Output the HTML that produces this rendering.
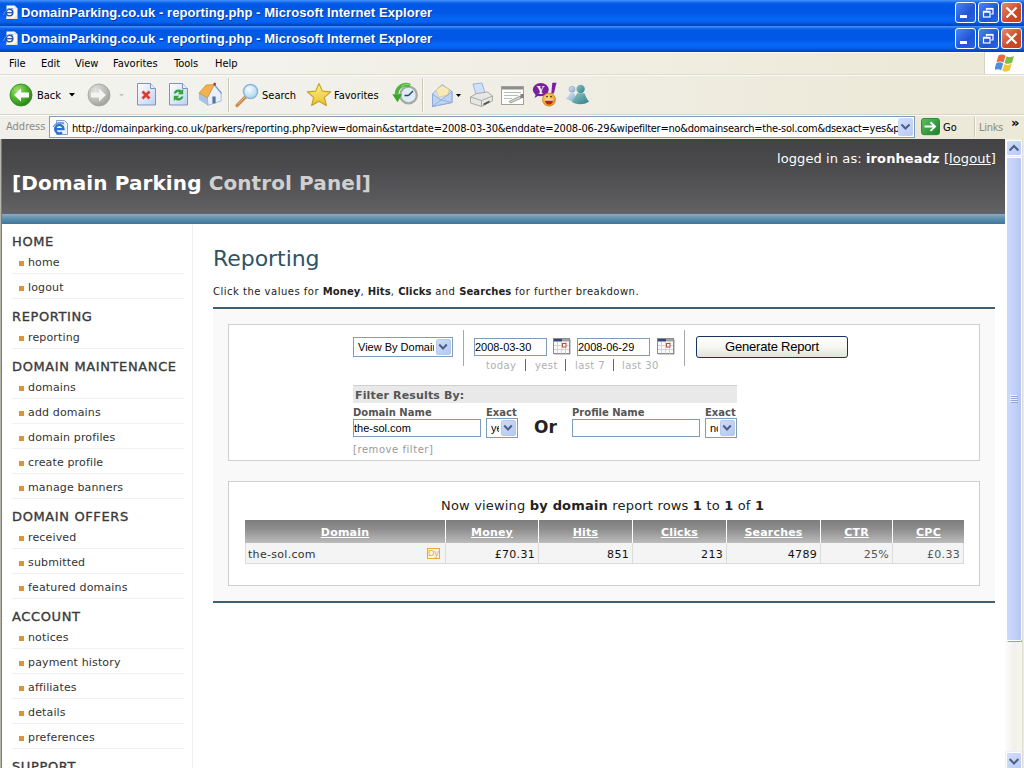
<!DOCTYPE html>
<html lang="en">
<head>
<meta charset="utf-8">
<title>DomainParking.co.uk - reporting.php - Microsoft Internet Explorer</title>
<style>
*{box-sizing:border-box;margin:0;padding:0}
html,body{width:1024px;height:768px;overflow:hidden;background:#fff}
body{position:relative;font-family:"DejaVu Sans","Liberation Sans",sans-serif;color:#333}
.abs{position:absolute}
/* ---------- XP chrome ---------- */
.tb{position:absolute;left:0;width:1024px;height:26px;background:linear-gradient(#4592fb 0,#2a7cf4 1.500px,#0a5fe9 3px,#0058e6 5px,#0058e6 13px,#0766f6 18px,#0562ee 22px,#004fd2 24px,#0040b4 26px)}
.tb .t{position:absolute;left:21px;top:5px;font:bold 13px/16px "Liberation Sans",sans-serif;letter-spacing:.07px;color:#fff;white-space:nowrap;text-shadow:1px 1px 0 #0a3aa0}
.tb .ico{position:absolute;left:2.500px;top:4.500px;width:16px;height:16px}
.wb{position:absolute;top:2px;width:21px;height:21px;border:1px solid #fff;border-radius:3px;background:linear-gradient(135deg,#4a86f0,#1f54d6 60%,#2a63e0)}
.wb svg{position:absolute;left:0;top:0}
.wb.x{background:linear-gradient(135deg,#e88a6a,#cc4a26 60%,#c8441f)}
.menubar{position:absolute;left:0;top:52px;width:1024px;height:23px;background:linear-gradient(90deg,#f6f5f1,#f2f1ea 30%,#f0eee2 60%,#ece9d8 90%);border-bottom:1px solid #dedbcb;box-shadow:inset 0 1px 0 #f8fbff}
.menubar span{position:absolute;top:4px;font:11px/15px "DejaVu Sans Condensed","Liberation Sans",sans-serif;color:#000}
.toolbar{position:absolute;left:0;top:75px;width:1024px;height:39px;overflow:hidden;background:linear-gradient(90deg,#f3f3ef,#f1f0ea 30%,#efede2 60%,#ece9d8 90%);border-top:1px solid #fbfbf8}
.toolbar .lbl{position:absolute;top:12px;font:11px/15px "DejaVu Sans Condensed","Liberation Sans",sans-serif;color:#000}
.addr{position:absolute;left:0;top:114px;width:1024px;height:25px;background:linear-gradient(90deg,#f0efea,#efeee6 30%,#eeece0 60%,#ece9d8 90%);border-top:1px solid #dad7c6;box-shadow:inset 0 1px 0 #fbfbf8}
.addr .lbl{position:absolute;font:11px/15px "DejaVu Sans Condensed","Liberation Sans",sans-serif}

.abox{position:absolute;left:49px;top:1px;width:866px;height:22px;border:1px solid #7f9db9;background:#fff;overflow:hidden}
.abox .url{position:absolute;left:22px;top:4px;font:11px/15px "DejaVu Sans Condensed","Liberation Sans",sans-serif;color:#000;white-space:nowrap;letter-spacing:-.15px}
.abox .add{position:absolute;right:1px;top:1px;width:15px;height:18px;border-radius:2px;background:linear-gradient(135deg,#d2defa,#b9cbf5)}
</style>
</head>
<body>
<!-- title bars -->
<div class="tb" style="top:0"><svg class="ico" viewBox="0 0 16 16"><path d="M3.500 .500h8l3 3v10.500h-11z" fill="#fbfbf6"/><path d="M11.500 .500v3h3" fill="#d8dcea"/><path d="M3 13l8 0 3-3v4h-11z" fill="#ece6cf"/><circle cx="6.500" cy="7.500" r="3.300" fill="none" stroke="#2452b8" stroke-width="1.500"/><path d="M3.500 7.700h6.200" stroke="#2452b8" stroke-width="1.300"/><path d="M.5 10c1.500-5 6-8 10-6" fill="none" stroke="#6f9ce8" stroke-width="1"/></svg><span class="t">DomainParking.co.uk - reporting.php - Microsoft Internet Explorer</span>
<div class="wb" style="left:955px"><svg width="19" height="19" viewBox="0 0 19 19"><rect x="4" y="12" width="7" height="3" fill="#fff"/></svg></div><div class="wb" style="left:978px"><svg width="19" height="19" viewBox="0 0 19 19"><path d="M7.500 7.500v-2h6.500v5.500h-2" fill="none" stroke="#fff" stroke-width="1.200"/><path d="M7.500 5.800h6.500" stroke="#fff" stroke-width="1.800"/><rect x="4.500" y="8.500" width="6.500" height="5.500" fill="none" stroke="#fff" stroke-width="1.200"/><path d="M4.500 8.800h6.500" stroke="#fff" stroke-width="1.800"/></svg></div><div class="wb x" style="left:1001px"><svg width="19" height="19" viewBox="0 0 19 19"><path d="M4.500 4.500l10 10m0-10l-10 10" stroke="#fff" stroke-width="2.200"/></svg></div></div>
<div class="tb" style="top:26px"><svg class="ico" viewBox="0 0 16 16"><path d="M3.500 .500h8l3 3v10.500h-11z" fill="#fbfbf6"/><path d="M11.500 .500v3h3" fill="#d8dcea"/><path d="M3 13l8 0 3-3v4h-11z" fill="#ece6cf"/><circle cx="6.500" cy="7.500" r="3.300" fill="none" stroke="#2452b8" stroke-width="1.500"/><path d="M3.500 7.700h6.200" stroke="#2452b8" stroke-width="1.300"/><path d="M.5 10c1.500-5 6-8 10-6" fill="none" stroke="#6f9ce8" stroke-width="1"/></svg><span class="t">DomainParking.co.uk - reporting.php - Microsoft Internet Explorer</span>
<div class="wb" style="left:955px"><svg width="19" height="19" viewBox="0 0 19 19"><rect x="4" y="12" width="7" height="3" fill="#fff"/></svg></div><div class="wb" style="left:978px"><svg width="19" height="19" viewBox="0 0 19 19"><path d="M7.500 7.500v-2h6.500v5.500h-2" fill="none" stroke="#fff" stroke-width="1.200"/><path d="M7.500 5.800h6.500" stroke="#fff" stroke-width="1.800"/><rect x="4.500" y="8.500" width="6.500" height="5.500" fill="none" stroke="#fff" stroke-width="1.200"/><path d="M4.500 8.800h6.500" stroke="#fff" stroke-width="1.800"/></svg></div><div class="wb x" style="left:1001px"><svg width="19" height="19" viewBox="0 0 19 19"><path d="M4.500 4.500l10 10m0-10l-10 10" stroke="#fff" stroke-width="2.200"/></svg></div></div>
<!-- menu -->
<div class="menubar"><span style="left:9px">File</span><span style="left:41px">Edit</span><span style="left:75px">View</span><span style="left:113px">Favorites</span><span style="left:174px">Tools</span><span style="left:215px">Help</span><div style="position:absolute;left:984px;top:0;width:40px;height:22px;background:#fff;border-left:1px solid #d6d2c2"><svg width="22" height="20" viewBox="0 0 22 20" style="position:absolute;left:10px;top:1px"><path d="M3.500 2.500c2.500-1.500 5-1.200 7 .2l-2 6.800c-2-1.300-4.500-1.600-7-.2z" fill="#e8683a"/><path d="M11.600 3.200c2.200 1.200 4.800 1.300 7.400-.2l-2 6.800c-2.600 1.400-5.200 1.300-7.400.1z" fill="#7dbf45"/><path d="M1.200 10.300c2.500-1.400 5-1.200 7 .2l-2 6.800c-2-1.300-4.500-1.600-7-.2z" fill="#4f8fe0"/><path d="M9.300 11c2.200 1.200 4.800 1.300 7.400-.2l-2 6.800c-2.600 1.400-5.200 1.300-7.400.1z" fill="#f5c53a"/></svg></div></div>
<div class="toolbar">
<svg width="1024" height="41" viewBox="0 75 1024 41" style="position:absolute;left:0;top:-1px">
<defs>
<radialGradient id="gB" cx=".35" cy=".3" r=".8"><stop offset="0" stop-color="#a6e071"/><stop offset=".5" stop-color="#4fb42c"/><stop offset="1" stop-color="#237a14"/></radialGradient>
<radialGradient id="gF" cx=".35" cy=".3" r=".8"><stop offset="0" stop-color="#e4e4e0"/><stop offset=".6" stop-color="#b9b9b4"/><stop offset="1" stop-color="#9a9a96"/></radialGradient>
<linearGradient id="gP" x1="0" y1="0" x2="1" y2="1"><stop offset="0" stop-color="#fff"/><stop offset="1" stop-color="#bdd0f2"/></linearGradient>
<radialGradient id="gL" cx=".4" cy=".35" r=".7"><stop offset="0" stop-color="#f4fbff"/><stop offset="1" stop-color="#a9d4ef"/></radialGradient>
<linearGradient id="gS" x1="0" y1="0" x2="0" y2="1"><stop offset="0" stop-color="#fdf08a"/><stop offset="1" stop-color="#e9c22d"/></linearGradient>
<radialGradient id="gY" cx=".4" cy=".35" r=".7"><stop offset="0" stop-color="#ffe36a"/><stop offset="1" stop-color="#e88a1c"/></radialGradient>
<linearGradient id="gM" x1="0" y1="0" x2="1" y2="1"><stop offset="0" stop-color="#8fc6c0"/><stop offset="1" stop-color="#2f7f8d"/></linearGradient>
<linearGradient id="gM2" x1="0" y1="0" x2="1" y2="1"><stop offset="0" stop-color="#dfeaf6"/><stop offset="1" stop-color="#7fa9c9"/></linearGradient>
</defs>
<!-- back -->
<circle cx="21" cy="95" r="11" fill="url(#gB)" stroke="#2c8a1b" stroke-width=".8"/>
<path d="M14 95l7-6.5v4h8v5h-8v4z" fill="#fff"/>
<path d="M69 93h6l-3 3.5z" fill="#000"/>
<!-- forward -->
<circle cx="99" cy="95" r="11" fill="url(#gF)" stroke="#a4a4a0" stroke-width=".8"/>
<path d="M106 95l-7-6.5v4h-8v5h8v4z" fill="#f4f4f2"/>
<path d="M119 94h5l-2.500 2.500z" fill="#c4c2b8"/>
<!-- stop -->
<path d="M137.500 83.500h13l5 5v16.500h-18z" fill="url(#gP)" stroke="#7e92c4"/>
<path d="M150.500 83.500v5h5" fill="#e9f0fc" stroke="#7e92c4"/>
<path d="M142.500 91.500l7 7m0-7l-7 7" stroke="#dd3b2b" stroke-width="2.600"/>
<!-- refresh -->
<path d="M169.500 83.500h13l5 5v16.500h-18z" fill="url(#gP)" stroke="#7e92c4"/>
<path d="M182.500 83.500v5h5" fill="#e9f0fc" stroke="#7e92c4"/>
<path d="M173.600 93.500a5 5 0 0 1 8-3l1.600-1.700v5.400h-5.400l1.800-1.800a2.800 2.800 0 0 0-3.800 1.100z" fill="#2fa53a"/>
<path d="M183.400 96.500a5 5 0 0 1-8 3l-1.600 1.700v-5.400h5.400l-1.800 1.800a2.800 2.800 0 0 0 3.800-1.100z" fill="#2fa53a"/>
<!-- home -->
<path d="M199.200 92.800l8.200 5 .6 7.500-8.500-5.700z" fill="#a9c3e8" stroke="#8fa6cf" stroke-width=".5"/>
<path d="M214.200 84.600l6.900 8.200v8.100l-13.100 4.400-.6-7.500z" fill="#e9f0fb" stroke="#8fa6cf" stroke-width=".7"/>
<path d="M206.100 85l8.100-.4-6.800 13.200-8.200-5z" fill="#f3b34c" stroke="#d6902a" stroke-width=".8" stroke-linejoin="round"/>
<path d="M214.200 84.600l7.400 8.800" stroke="#7f97c6" stroke-width="1.400"/>
<rect x="212.400" y="96.500" width="3.200" height="6.900" fill="#566fa6"/>
<rect x="213.600" y="82.800" width="2.200" height="2.600" fill="#a33325"/>
<!-- sep -->
<path d="M228.500 78v34M422.500 78v34" stroke="#cdc9b8"/><path d="M229.500 78v34M423.500 78v34" stroke="#fbfaf6"/>
<!-- search -->
<path d="M246 96.500l-9 9" stroke="#c98b4c" stroke-width="3.200" stroke-linecap="round"/>
<path d="M246.500 95.500l-8.500 8.500" stroke="#e9b980" stroke-width="1" stroke-linecap="round"/>
<circle cx="250.500" cy="91.500" r="7" fill="url(#gL)" stroke="#8fb6d9" stroke-width="1.600"/>
<!-- star -->
<path d="M319 83.500l3.400 7.600 8.300.8-6.300 5.500 1.900 8.100-7.300-4.300-7.300 4.300 1.900-8.100-6.300-5.500 8.300-.8z" fill="url(#gS)" stroke="#c9a01a" stroke-width="1.100" stroke-linejoin="round"/>
<!-- history -->
<circle cx="408.500" cy="95" r="8.300" fill="#dbeef8" stroke="#a7aaa2" stroke-width="2.200"/>
<path d="M408.500 95.500l4.500-4.500M408.500 95.500h-4" stroke="#2f3f63" stroke-width="1.400"/>
<path d="M410 85.600a9.300 9.300 0 0 0-13.300 8.900" fill="none" stroke="#4db53c" stroke-width="3.800"/>
<path d="M392.300 94.300h9.800l-4.600 8z" fill="#3aa62e"/>
<path d="M409.500 84.300a10 10 0 0 0-8 2" fill="none" stroke="#9be07c" stroke-width="1"/>
<!-- mail -->
<path d="M432.500 94l9.500-9.500 10 7v11l-19.500 4z" fill="#cfe0f6" stroke="#8ea6d6" stroke-width=".9"/>
<path d="M436 90l6-4.500 7 3.500-1 6-9 2z" fill="#f8e9b8" stroke="#d9c07a" stroke-width=".6"/>
<path d="M432.500 94l8.500 6 11-8.500v11l-19.500 4z" fill="#bcd3f2" stroke="#8ea6d6" stroke-width=".9"/>
<path d="M432.500 106.500l8.500-6.500 11 2.500" fill="none" stroke="#8ea6d6" stroke-width=".8"/>
<path d="M456 94h5l-2.500 3z" fill="#000"/>
<!-- print -->
<path d="M473 84l9-1 3 10-9 1.500z" fill="#cfe0fa" stroke="#8ea6d6" stroke-width=".8"/>
<path d="M470.500 97l6-3.500 11-1.500 5 4v5l-11 5.500-11-3.500z" fill="#e6e6e2" stroke="#9a9a96" stroke-width=".8"/>
<path d="M470.500 97l11 3.500 11-4.500M481.500 100.500v6" fill="none" stroke="#9a9a96" stroke-width=".8"/>
<path d="M483.500 103.500l6-3v2l-6 3z" fill="#55554f"/>
<!-- edit -->
<rect x="501.500" y="86.500" width="22" height="18" fill="#fdfdfb" stroke="#a2a29c"/>
<rect x="502" y="87" width="21" height="2.500" fill="#8f8f8a"/>
<path d="M504 92.500h17M504 95.500h14M504 98.500h8" stroke="#b4b4ae" stroke-width=".9"/>
<path d="M509 101.500l11-5.500 1.500 2-11 5z" fill="#d9d9d4" stroke="#7c7c78" stroke-width=".7"/>
<rect x="520.500" y="94" width="3" height="4" fill="#7c7c78"/>
<!-- yahoo -->
<ellipse cx="540.800" cy="89.600" rx="8" ry="6.600" fill="#7a1fa0"/>
<path d="M536 94l-1.500 4 5-3z" fill="#7a1fa0"/>
<path d="M552.300 82.800h4.200l-2.600 10.800h-2.600z" fill="#7a1fa0"/>
<text x="536.500" y="94" font-family="Liberation Serif,serif" font-weight="bold" font-size="11.500" fill="#fff">Y</text>
<circle cx="549" cy="99.600" r="6.500" fill="url(#gY)" stroke="#c97a14" stroke-width=".7"/>
<path d="M544.800 99.300h8.400c0 3.600-1.900 5.200-4.200 5.200s-4.200-1.600-4.200-5.200z" fill="#b3261c"/>
<path d="M544.800 99.300h8.400v1.300h-8.400z" fill="#fff"/>
<circle cx="547" cy="96.600" r=".9" fill="#3a2a10"/><circle cx="551" cy="96.600" r=".9" fill="#3a2a10"/>
<!-- messenger -->
<circle cx="572" cy="89.300" r="3" fill="url(#gM2)" stroke="#7f93b5" stroke-width=".5"/>
<path d="M565.500 98.500c2-1 3.500-3.500 4.500-5.500h4l3 6-6 2z" fill="url(#gM2)"/>
<circle cx="580.600" cy="89" r="4.200" fill="url(#gM)"/>
<path d="M571.500 101.500c2.500-2 4-5 5.500-8.200h7.400c1.500 3.200 2.500 6 4.600 8.200-3 3.200-13.500 3.800-17.500 0z" fill="url(#gM)"/>
</svg>
<span class="lbl" style="left:37px">Back</span>
<span class="lbl" style="left:262px">Search</span>
<span class="lbl" style="left:334px">Favorites</span>
</div>
<div class="addr">
<span class="lbl" style="left:6px;top:4px;color:#8c8a80">Address</span>
<div class="abox"><svg width="17" height="17" viewBox="0 0 17 17" style="position:absolute;left:2px;top:2px"><path d="M4.500 1.500h8l3 3v11h-11z" fill="#eef3fb" stroke="#8a9cc8"/><rect x="6" y="3" width="6" height="2" fill="#9ab0dc"/><path d="M3.300 10.200h8.200a4.200 4.200 0 1 0-1.500 3.200" fill="none" stroke="#2b6fd0" stroke-width="2.300"/><path d="M1 8c2-4 8-6 11-3" fill="none" stroke="#5c9be8" stroke-width="1.200"/></svg>
<span class="url">http://domainparking.co.uk/parkers/reporting.php?view=domain&amp;startdate=2008-03-30&amp;enddate=2008-06-29<span style="letter-spacing:-.27px">&amp;wipefilter=no&amp;domainsearch=the-sol.com&amp;dsexact=yes&amp;p</span></span>
<div class="add"><svg width="15" height="17" viewBox="0 0 15 17" style="position:absolute;left:0;top:0"><path d="M3.500 6.500l4 4 4-4" fill="none" stroke="#4d6185" stroke-width="2.100"/></svg></div></div>
<svg width="19" height="18" viewBox="0 0 19 18.900" preserveAspectRatio="none" style="position:absolute;left:920.500px;top:3px"><defs><linearGradient id="gG" x1="0" y1="0" x2="1" y2="1"><stop offset="0" stop-color="#5cc05e"/><stop offset="1" stop-color="#1f7f2b"/></linearGradient></defs><rect x=".5" y=".5" width="18" height="17" rx="2.500" fill="url(#gG)" stroke="#2c8a34"/><path d="M3.500 9h10M9.500 4.500l4.500 4.500-4.500 4.500" fill="none" stroke="#fff" stroke-width="2"/></svg>
<span class="lbl" style="left:943px;top:5px;color:#000">Go</span>
<div style="position:absolute;left:974px;top:2px;width:1px;height:20px;background:#cdc9b8"></div><div style="position:absolute;left:975px;top:2px;width:1px;height:20px;background:#fbfaf6"></div>
<span class="lbl" style="left:979px;top:5px;color:#8c8a80;letter-spacing:-.3px">Links</span>
<span style="position:absolute;left:1011px;top:0px;font:bold 13px/15px 'DejaVu Sans',sans-serif;color:#000">»</span>
</div>
<!-- PAGE -->
<div id="page" class="abs" style="left:0;top:139px;width:1024px;height:629px;overflow:hidden">
<style>
#page{background:#fff}
.hdr{position:absolute;left:0;top:0;width:1005px;height:75px;background:linear-gradient(#434345,#4a4a4c 35%,#5a5a5c 80%,#626264 97%,#5a666c)}
.band{position:absolute;left:0;top:75px;width:1005px;height:10px;background:linear-gradient(#8dadc2,#6592b0 40%,#3c769e)}
.lb{position:absolute;left:0;top:0;width:2px;height:629px;background:linear-gradient(90deg,#b8b5ab 50%,#7c7a74 50%)}
.h1{position:absolute;left:12px;top:32px;font:bold 20px/24px "DejaVu Sans",sans-serif;letter-spacing:.1px;color:#fff;white-space:nowrap}
.h1 i{font-style:normal;color:#d0d0d0}
.login{position:absolute;right:28px;top:12px;font:13px/16px "DejaVu Sans",sans-serif;color:#fff;white-space:nowrap;letter-spacing:.1px}
.login b{font-weight:bold}.login u{text-decoration:underline}
.side{position:absolute;left:2px;top:85px;width:191px;height:544px;border-right:1px solid #efefef;background:#fff}
.side h3{position:absolute;left:10px;font:normal 13px/15px "DejaVu Sans",sans-serif;letter-spacing:.62px;color:#3a3a3a;-webkit-text-stroke:.35px #3a3a3a;white-space:nowrap;transform:scaleY(.93);transform-origin:0 100%}
.side .it{position:absolute;left:10px;width:172px;height:25px;border-bottom:1px solid #f0f0f0;font:11px/14px "DejaVu Sans",sans-serif;letter-spacing:.15px;color:#333;white-space:nowrap}
.side .it:before{content:"";position:absolute;left:7px;top:12px;width:5px;height:5px;background:#d9953a}
.side .it span{position:absolute;left:16px;top:7px}
</style>
<div class="hdr"></div><div class="band"></div>
<div class="h1">[Domain Parking <i>Control Panel]</i></div>
<div class="login">logged in as: <b>ironheadz</b> [<u>logout</u>]</div>
<div class="side">
<h3 style="top:10px">HOME</h3>
<div class="it" style="top:25px"><span>home</span></div>
<div class="it" style="top:50px"><span>logout</span></div>
<h3 style="top:85px">REPORTING</h3>
<div class="it" style="top:100px"><span>reporting</span></div>
<h3 style="top:135px">DOMAIN MAINTENANCE</h3>
<div class="it" style="top:150px"><span>domains</span></div>
<div class="it" style="top:175px"><span>add domains</span></div>
<div class="it" style="top:200px"><span>domain profiles</span></div>
<div class="it" style="top:225px"><span>create profile</span></div>
<div class="it" style="top:250px"><span>manage banners</span></div>
<h3 style="top:285px">DOMAIN OFFERS</h3>
<div class="it" style="top:300px"><span>received</span></div>
<div class="it" style="top:325px"><span>submitted</span></div>
<div class="it" style="top:350px"><span>featured domains</span></div>
<h3 style="top:385px">ACCOUNT</h3>
<div class="it" style="top:400px"><span>notices</span></div>
<div class="it" style="top:425px"><span>payment history</span></div>
<div class="it" style="top:450px"><span>affiliates</span></div>
<div class="it" style="top:475px"><span>details</span></div>
<div class="it" style="top:500px"><span>preferences</span></div>
<h3 style="top:535px">SUPPORT</h3>
</div>
<div class="lb"></div>

<style>
.main{position:absolute;left:0;top:0;width:1005px;height:629px}
.main *{position:absolute;white-space:nowrap}
.h2{left:213px;top:106.500px;font:22px/26px "DejaVu Sans",sans-serif;color:#2d5465;letter-spacing:-.05px}
.intro{left:213px;top:146px;font:10px/13px "DejaVu Sans",sans-serif;color:#222;letter-spacing:.5px}
.intro b{position:static;font-weight:bold;letter-spacing:.1px}
.rule{left:213px;width:782px;height:2px;background:#3f5f6f}
.grey{left:213px;top:170px;width:782px;height:292px;background:#f9f9f9}
.box{left:228px;width:752px;background:#fff;border:1px solid #cfcfcf}
.xin{height:18px;border:1px solid #7f9db9;background:#fff;font:11px/16px "Liberation Sans",sans-serif;color:#000;padding-left:0;overflow:hidden}
.xsel{height:20px;border:1px solid #7f9db9;background:#fff;font:11px/18px "Liberation Sans",sans-serif;color:#000;overflow:hidden}
.xsel span{left:4px;top:0;right:18px;overflow:hidden}
.xsel .dd{right:1px;top:1px;width:15px;height:16px;border-radius:2px;background:linear-gradient(135deg,#cfdcf8,#b4c8f2);border:1px solid #b7c8ee}
.vsep{width:1px;height:36px;background:#a8a8a8;top:191px}
.ql{top:220px;font:10px/13px "DejaVu Sans",sans-serif;color:#b0b0b0;letter-spacing:.4px}
.qs{top:220px;width:1px;height:12px;background:#666}
.ql i{position:static;font-style:normal;color:#555}
.btn{left:696px;top:197px;width:152px;height:22px;border:1px solid #16345c;border-radius:3px;background:linear-gradient(#fff,#f6f6f2 50%,#e4e3da);font:13px/20px "Liberation Sans",sans-serif;letter-spacing:-.2px;color:#000;text-align:center}
.fbar{left:353px;top:246px;width:384px;height:18px;background:#e9e9e9;border-top:1px solid #d0d0d0}
.fbar span{left:2px;top:3px;font:bold 11px/14px "DejaVu Sans",sans-serif;color:#555;letter-spacing:.15px}
.lab{font:bold 10px/12px "DejaVu Sans",sans-serif;color:#555;top:268px}
.or{left:534px;top:277px;font:bold 17px/22px "DejaVu Sans",sans-serif;color:#222}
.rm{left:353px;top:304px;font:10px/13px "DejaVu Sans",sans-serif;color:#999;letter-spacing:.55px}
.nv{left:441px;top:359px;font:13px/16px "DejaVu Sans",sans-serif;color:#222;letter-spacing:.18px}
.nv b{position:static;font-weight:bold;color:#222}
.th{top:381px;height:23px;background:linear-gradient(#7d7d7d,#8e8e8e 40%,#bcbcbc);font:bold 11px/25px "DejaVu Sans",sans-serif;color:#fff;text-align:center;text-decoration:underline;letter-spacing:.2px;overflow:hidden}
.td{top:404px;height:21px;background:#f4f4f4;border:1px solid #dcdcdc;border-top:0;font:11px/24px "DejaVu Sans",sans-serif;color:#111;overflow:hidden;text-align:right;padding-right:3px;letter-spacing:.3px}
.td.g{color:#555}
.dy{left:427px;top:409px;width:13px;height:11px;border:1px solid #e9a83f;color:#e9a83f;font:9px/9px "Liberation Sans",sans-serif;text-align:center;background:#fdf6e3}
</style>
<div class="main">
<div class="h2">Reporting</div>
<div class="intro">Click the values for <b>Money</b>, <b>Hits</b>, <b>Clicks</b> and <b>Searches</b> for further breakdown.</div>
<div class="grey"></div>
<div class="rule" style="top:168px"></div>
<div class="rule" style="top:462px"></div>
<div class="box" style="top:185px;height:137px"></div>
<div class="box" style="top:342px;height:105px"></div>
<div class="xsel" style="left:353px;top:198px;width:100px"><span>View By Domain</span><div class="dd"><svg width="14" height="14" viewBox="0 0 14 14" style="left:-1px;top:0"><path d="M3.200 4.600l3.800 3.800 3.800-3.800" fill="none" stroke="#4d6185" stroke-width="2.100"/></svg></div></div>
<div class="vsep" style="left:463px"></div>
<div class="xin" style="left:474px;top:199px;width:73px">2008-03-30</div>
<div class="xin" style="left:577px;top:199px;width:73px">2008-06-29</div>
<svg class="cal" style="left:553px;top:199px" width="18" height="17" viewBox="0 0 18 17"><rect x="1.500" y="1.500" width="16" height="15" fill="#9a9a9a"/><rect x=".500" y=".500" width="16" height="15" fill="#fbfaf6" stroke="#8c8c8c"/><rect x="1" y="1" width="8" height="2.500" fill="#34457e"/><rect x="9" y="1" width="7" height="2.500" fill="#a2a2a2"/><path d="M1 7.500h15M1 11.500h15M4.500 4v11.500M8.500 4v11.500M12.500 4v11.500" stroke="#d6cfe0" stroke-width="1"/><rect x="9.500" y="5.500" width="3.500" height="3.500" fill="#fff" stroke="#a8503c" stroke-width="1"/></svg><svg class="cal" style="left:657px;top:199px" width="18" height="17" viewBox="0 0 18 17"><rect x="1.500" y="1.500" width="16" height="15" fill="#9a9a9a"/><rect x=".500" y=".500" width="16" height="15" fill="#fbfaf6" stroke="#8c8c8c"/><rect x="1" y="1" width="8" height="2.500" fill="#34457e"/><rect x="9" y="1" width="7" height="2.500" fill="#a2a2a2"/><path d="M1 7.500h15M1 11.500h15M4.500 4v11.500M8.500 4v11.500M12.500 4v11.500" stroke="#d6cfe0" stroke-width="1"/><rect x="9.500" y="5.500" width="3.500" height="3.500" fill="#fff" stroke="#a8503c" stroke-width="1"/></svg><div class="vsep" style="left:684px"></div>
<div class="ql" style="left:486px">today</div><div class="ql" style="left:535px">yest</div><div class="ql" style="left:575px">last 7</div><div class="ql" style="left:622px">last 30</div><div class="qs" style="left:525px"></div><div class="qs" style="left:565px"></div><div class="qs" style="left:613px"></div>
<div class="btn">Generate Report</div>
<div class="fbar"><span>Filter Results By:</span></div>
<div class="lab" style="left:353px">Domain Name</div>
<div class="lab" style="left:486px">Exact</div>
<div class="lab" style="left:572px">Profile Name</div>
<div class="lab" style="left:705px">Exact</div>
<div class="xin" style="left:353px;top:280px;width:128px">the-sol.com</div>
<div class="xsel" style="left:486px;top:279px;width:32px"><span>yes</span><div class="dd"><svg width="14" height="14" viewBox="0 0 14 14" style="left:-1px;top:0"><path d="M3.200 4.600l3.800 3.800 3.800-3.800" fill="none" stroke="#4d6185" stroke-width="2.100"/></svg></div></div>
<div class="or">Or</div>
<div class="xin" style="left:572px;top:280px;width:128px"></div>
<div class="xsel" style="left:705px;top:279px;width:32px"><span>no</span><div class="dd"><svg width="14" height="14" viewBox="0 0 14 14" style="left:-1px;top:0"><path d="M3.200 4.600l3.800 3.800 3.800-3.800" fill="none" stroke="#4d6185" stroke-width="2.100"/></svg></div></div>
<div class="rm">[remove filter]</div>
<div class="nv">Now viewing <b>by domain</b> report rows <b>1</b> to <b>1</b> of <b>1</b></div>
<div class="th" style="left:245px;width:200px">Domain</div>
<div class="th" style="left:446px;width:92px">Money</div>
<div class="th" style="left:539px;width:93px">Hits</div>
<div class="th" style="left:633px;width:93px">Clicks</div>
<div class="th" style="left:727px;width:93px">Searches</div>
<div class="th" style="left:821px;width:71px">CTR</div>
<div class="th" style="left:893px;width:71px">CPC</div>
<div class="td" style="left:245px;width:201px;text-align:left;padding-left:2px;color:#333">the-sol.com</div>
<div class="td" style="left:445px;width:94px">£70.31</div>
<div class="td" style="left:538px;width:95px">851</div>
<div class="td" style="left:632px;width:95px">213</div>
<div class="td" style="left:726px;width:95px">4789</div>
<div class="td g" style="left:820px;width:73px">25%</div>
<div class="td g" style="left:892px;width:72px">£0.33</div>
<div class="dy">Dy</div>
</div>


<style>
.sb{position:absolute;left:1005px;top:0;width:19px;height:629px;background:linear-gradient(90deg,#fdfdfb,#f1f0ea 50%,#f7f6f2)}
.sb .b{position:absolute;left:1px;width:16px;height:16px;border:1px solid #fff;border-radius:2px;background:linear-gradient(135deg,#d2defa,#b9cbf5);box-shadow:0 0 0 1px #e8eefc}
.sb .thumb{position:absolute;left:1px;top:18px;width:16px;height:484px;border:1px solid #fff;border-radius:2px;background:linear-gradient(90deg,#cbd9fb,#c2d2fa 50%,#b5c6f2);box-shadow:1px 1px 0 #8da0cf}
.sb .re{position:absolute;left:17px;top:0;width:2px;height:629px;background:linear-gradient(90deg,#d9d6c8,#f4f3ee)}
</style>
<div class="sb">
<div class="b" style="top:1px"><svg width="14" height="14" viewBox="0 0 14 14" style="position:absolute;left:0;top:0"><path d="M2.6 9.4L7 5l4.4 4.4" fill="none" stroke="#4d6185" stroke-width="2.1"/></svg></div>
<div class="thumb"><svg width="8" height="9" viewBox="0 0 8 9" style="position:absolute;left:3px;top:237px"><path d="M0 .5h7M0 2.5h7M0 4.5h7M0 6.5h7" stroke="#eef3ff" stroke-width="1"/><path d="M1 1.5h7M1 3.5h7M1 5.5h7M1 7.5h7" stroke="#8ea3d8" stroke-width="1"/></svg></div>
<div class="b" style="top:613px;height:18px"><svg width="14" height="14" viewBox="0 0 14 14" style="position:absolute;left:0;top:1px"><path d="M2.6 5L7 9.4 11.4 5" fill="none" stroke="#4d6185" stroke-width="2.1"/></svg></div>
<div class="re"></div>
</div>

</div>
</body>
</html>
